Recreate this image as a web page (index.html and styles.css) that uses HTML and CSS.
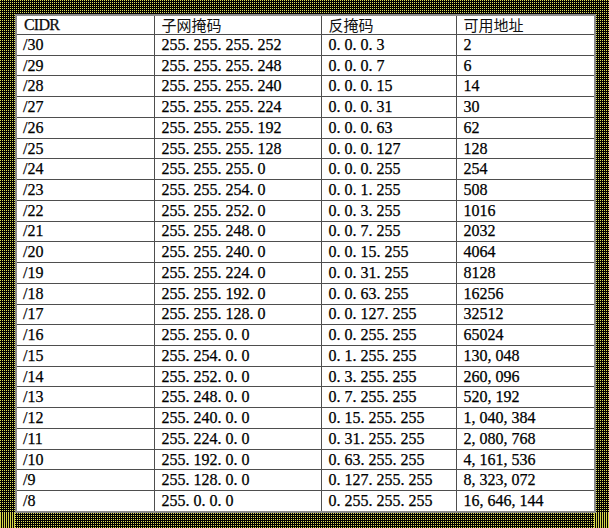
FILE: index.html
```html
<!DOCTYPE html>
<html lang="zh-CN">
<head>
<meta charset="utf-8">
<title>CIDR</title>
<link rel="stylesheet" href="styles.css">
</head>
<body>
<div class="page">
  <div class="frame">
    <table class="t">
      <colgroup>
        <col class="c1"><col class="c2"><col class="c3"><col class="c4">
      </colgroup>
      <thead>
        <tr><th class="latin">CIDR</th><th>子网掩码</th><th>反掩码</th><th>可用地址</th></tr>
      </thead>
      <tbody>
        <tr><td>/30</td><td>255<i>.</i>255<i>.</i>255<i>.</i>252</td><td>0<i>.</i>0<i>.</i>0<i>.</i>3</td><td>2</td></tr>
        <tr><td>/29</td><td>255<i>.</i>255<i>.</i>255<i>.</i>248</td><td>0<i>.</i>0<i>.</i>0<i>.</i>7</td><td>6</td></tr>
        <tr><td>/28</td><td>255<i>.</i>255<i>.</i>255<i>.</i>240</td><td>0<i>.</i>0<i>.</i>0<i>.</i>15</td><td>14</td></tr>
        <tr><td>/27</td><td>255<i>.</i>255<i>.</i>255<i>.</i>224</td><td>0<i>.</i>0<i>.</i>0<i>.</i>31</td><td>30</td></tr>
        <tr><td>/26</td><td>255<i>.</i>255<i>.</i>255<i>.</i>192</td><td>0<i>.</i>0<i>.</i>0<i>.</i>63</td><td>62</td></tr>
        <tr><td>/25</td><td>255<i>.</i>255<i>.</i>255<i>.</i>128</td><td>0<i>.</i>0<i>.</i>0<i>.</i>127</td><td>128</td></tr>
        <tr><td>/24</td><td>255<i>.</i>255<i>.</i>255<i>.</i>0</td><td>0<i>.</i>0<i>.</i>0<i>.</i>255</td><td>254</td></tr>
        <tr><td>/23</td><td>255<i>.</i>255<i>.</i>254<i>.</i>0</td><td>0<i>.</i>0<i>.</i>1<i>.</i>255</td><td>508</td></tr>
        <tr><td>/22</td><td>255<i>.</i>255<i>.</i>252<i>.</i>0</td><td>0<i>.</i>0<i>.</i>3<i>.</i>255</td><td>1016</td></tr>
        <tr><td>/21</td><td>255<i>.</i>255<i>.</i>248<i>.</i>0</td><td>0<i>.</i>0<i>.</i>7<i>.</i>255</td><td>2032</td></tr>
        <tr><td>/20</td><td>255<i>.</i>255<i>.</i>240<i>.</i>0</td><td>0<i>.</i>0<i>.</i>15<i>.</i>255</td><td>4064</td></tr>
        <tr><td>/19</td><td>255<i>.</i>255<i>.</i>224<i>.</i>0</td><td>0<i>.</i>0<i>.</i>31<i>.</i>255</td><td>8128</td></tr>
        <tr><td>/18</td><td>255<i>.</i>255<i>.</i>192<i>.</i>0</td><td>0<i>.</i>0<i>.</i>63<i>.</i>255</td><td>16256</td></tr>
        <tr><td>/17</td><td>255<i>.</i>255<i>.</i>128<i>.</i>0</td><td>0<i>.</i>0<i>.</i>127<i>.</i>255</td><td>32512</td></tr>
        <tr><td>/16</td><td>255<i>.</i>255<i>.</i>0<i>.</i>0</td><td>0<i>.</i>0<i>.</i>255<i>.</i>255</td><td>65024</td></tr>
        <tr><td>/15</td><td>255<i>.</i>254<i>.</i>0<i>.</i>0</td><td>0<i>.</i>1<i>.</i>255<i>.</i>255</td><td>130<i>,</i>048</td></tr>
        <tr><td>/14</td><td>255<i>.</i>252<i>.</i>0<i>.</i>0</td><td>0<i>.</i>3<i>.</i>255<i>.</i>255</td><td>260<i>,</i>096</td></tr>
        <tr><td>/13</td><td>255<i>.</i>248<i>.</i>0<i>.</i>0</td><td>0<i>.</i>7<i>.</i>255<i>.</i>255</td><td>520<i>,</i>192</td></tr>
        <tr><td>/12</td><td>255<i>.</i>240<i>.</i>0<i>.</i>0</td><td>0<i>.</i>15<i>.</i>255<i>.</i>255</td><td>1<i>,</i>040<i>,</i>384</td></tr>
        <tr><td>/11</td><td>255<i>.</i>224<i>.</i>0<i>.</i>0</td><td>0<i>.</i>31<i>.</i>255<i>.</i>255</td><td>2<i>,</i>080<i>,</i>768</td></tr>
        <tr><td>/10</td><td>255<i>.</i>192<i>.</i>0<i>.</i>0</td><td>0<i>.</i>63<i>.</i>255<i>.</i>255</td><td>4<i>,</i>161<i>,</i>536</td></tr>
        <tr><td>/9</td><td>255<i>.</i>128<i>.</i>0<i>.</i>0</td><td>0<i>.</i>127<i>.</i>255<i>.</i>255</td><td>8<i>,</i>323<i>,</i>072</td></tr>
        <tr><td>/8</td><td>255<i>.</i>0<i>.</i>0<i>.</i>0</td><td>0<i>.</i>255<i>.</i>255<i>.</i>255</td><td>16<i>,</i>646<i>,</i>144</td></tr>
      </tbody>
    </table>
  </div>
  <div class="foot">
    <div class="stripe"></div>
    <div class="dots"></div>
    <div class="stripe"></div>
  </div>
</div>
</body>
</html>
```

FILE: styles.css
```css
html, body {
  margin: 0;
  padding: 0;
}

body {
  width: 609px;
  height: 528px;
  overflow: hidden;
  background-color: #000;
}

.page {
  width: 609px;
  height: 528px;
  display: flex;
  flex-direction: column;
}

.frame,
.dots {
  background-color: #000;
  background-image: conic-gradient(at 1px 1px, #000 0 75%, #dede58 75% 100%);
  background-size: 2px 2px;
}

.frame {
  padding: 14px 15px 0 15px;
}

.t {
  width: 579px;
  height: 499px;
  border-collapse: collapse;
  table-layout: fixed;
  background: #fff;
  border: 2px solid #8a8a8a;
  font-family: "Liberation Serif", "Noto Sans CJK SC", serif;
  font-size: 16px;
  color: #000;
  -webkit-text-stroke: 0.25px #000;
}

.c1 { width: 138px; }
.c2 { width: 167px; }
.c3 { width: 135px; }
.c4 { width: 139px; }

.t th,
.t td {
  border: 1px solid #4e4e4e;
  padding: 0 0 0 6px;
  line-height: 18px;
  text-align: left;
  white-space: nowrap;
  font-weight: normal;
}

.t td:nth-child(n+2) {
  padding-left: 7px;
}

.t th {
  font-family: "Noto Sans CJK SC", sans-serif;
  font-size: 15px;
  color: #111;
  padding-left: 7px;
  -webkit-text-stroke: 0;
}

.t th.latin {
  font-family: "Liberation Serif", serif;
  font-size: 16px;
  letter-spacing: -0.8px;
  padding-left: 7px;
  -webkit-text-stroke: 0.25px #000;
}

.t i {
  font-style: normal;
  letter-spacing: 4px;
}

.foot {
  flex: 1;
  display: flex;
}

.stripe {
  width: 15px;
  background: repeating-linear-gradient(90deg, #d6d646 0 1px, #000 1px 2px);
}

.dots {
  flex: 1;
}
```
